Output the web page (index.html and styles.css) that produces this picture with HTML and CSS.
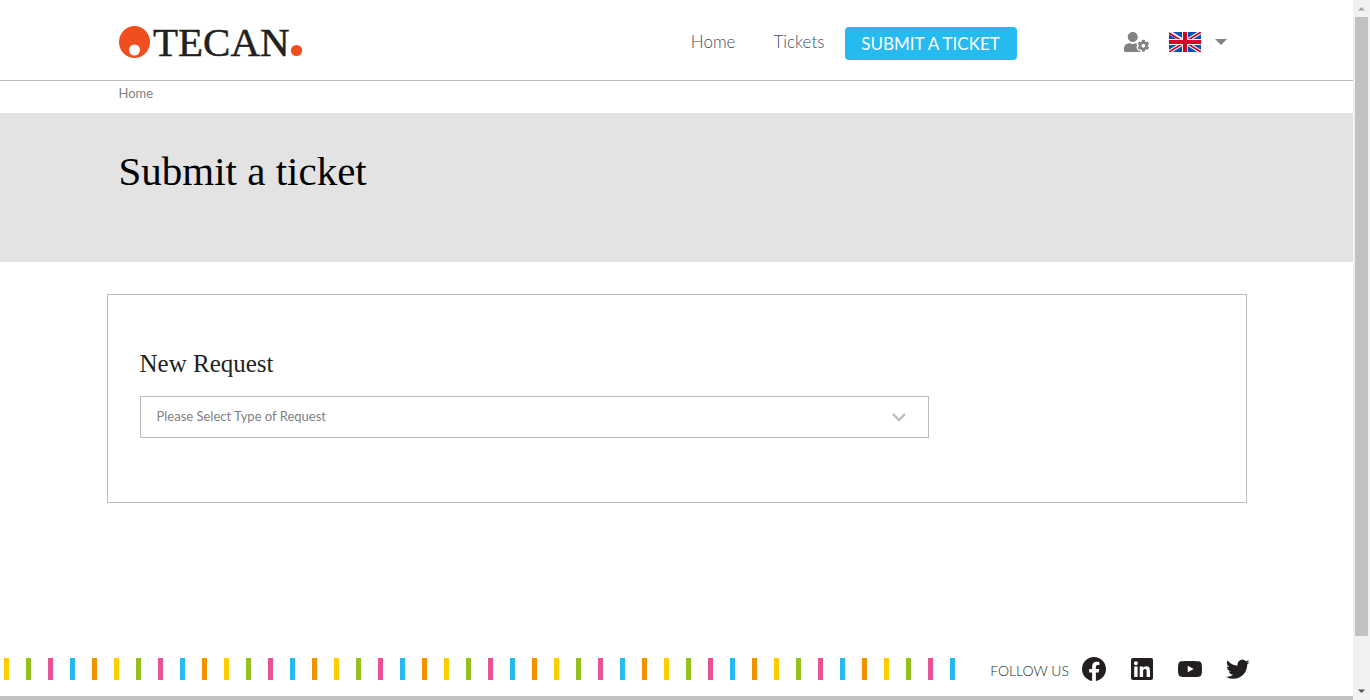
FILE: index.html
```html
<!DOCTYPE html>
<html lang="en">
<head>
<meta charset="utf-8">
<title>Submit a ticket</title>
<link rel="stylesheet" href="styles.css">
</head>
<body>
<div class="page">
  <header class="header">
    <div class="container header-row">
      <a class="logo" href="#" aria-label="Tecan">
        <svg width="184" height="54" viewBox="0 -10 184 54">
          <ellipse cx="15.500" cy="17" rx="15.500" ry="16" fill="#f04e1f"/>
          <circle cx="15.500" cy="25" r="5.500" fill="#fff"/>
          <text x="34" y="31" class="logo-text">TECAN</text>
          <circle cx="177.500" cy="25.500" r="5.600" fill="#f04e1f"/>
        </svg>
      </a>
      <nav class="nav">
        <a class="nav-link" href="#">Home</a>
        <a class="nav-link" href="#">Tickets</a>
        <a class="nav-button" href="#">SUBMIT A TICKET</a>
      </nav>
      <div class="tools">
        <button class="icon-button" type="button" aria-label="Account settings">
          <svg width="25" height="20" viewBox="0 0 640 512" fill="#808285"><path d="M610.5 373.3c2.600-14.100 2.600-28.500 0-42.600l25.800-14.900c3-1.700 4.300-5.200 3.300-8.500-6.700-21.600-18.200-41.200-33.200-57.400-2.300-2.500-6-3.100-9-1.400l-25.800 14.900c-10.900-9.300-23.400-16.500-36.900-21.300v-29.800c0-3.400-2.400-6.400-5.700-7.100-22.300-5-45-4.800-66.200 0-3.300.7-5.700 3.700-5.700 7.100v29.800c-13.500 4.800-26 12-36.900 21.300l-25.800-14.900c-2.900-1.700-6.700-1.100-9 1.400-15 16.200-26.500 35.800-33.200 57.400-1 3.300.4 6.800 3.300 8.500l25.800 14.900c-2.600 14.100-2.600 28.500 0 42.600l-25.800 14.900c-3 1.700-4.300 5.200-3.300 8.500 6.700 21.600 18.200 41.100 33.200 57.400 2.300 2.500 6 3.100 9 1.400l25.800-14.900c10.900 9.300 23.400 16.500 36.900 21.300v29.800c0 3.400 2.400 6.400 5.700 7.100 22.300 5 45 4.800 66.200 0 3.300-.7 5.700-3.700 5.700-7.100v-29.800c13.500-4.800 26-12 36.900-21.300l25.800 14.900c2.900 1.700 6.700 1.100 9-1.400 15-16.200 26.500-35.800 33.200-57.400 1-3.300-.4-6.800-3.300-8.500l-25.800-14.900zM496 400.500c-26.800 0-48.500-21.800-48.500-48.500s21.800-48.500 48.500-48.500 48.500 21.800 48.500 48.500-21.700 48.500-48.500 48.500zM224 256c70.700 0 128-57.300 128-128S294.700 0 224 0 96 57.300 96 128s57.300 128 128 128zm201.200 226.500c-2.300-1.200-4.600-2.600-6.800-3.900l-7.900 4.600c-6 3.400-12.800 5.300-19.600 5.300-10.900 0-21.400-4.600-28.900-12.600-18.300-19.800-32.300-43.900-40.200-69.600-5.500-17.700 1.900-36.400 17.900-45.700l7.900-4.600c-.1-2.600-.1-5.200 0-7.800l-7.900-4.600c-16-9.200-23.400-28-17.900-45.700.9-2.900 2.200-5.800 3.200-8.700-3.800-.3-7.500-1.200-11.400-1.200h-16.700c-22.200 10.200-46.900 16-72.900 16s-50.600-5.800-72.900-16h-16.700C60.200 288 0 348.200 0 422.400V464c0 26.500 21.500 48 48 48h352c10.100 0 19.500-3.200 27.200-8.500-1.200-3.800-2-7.700-2-11.800v-9.200z"/></svg>
        </button>
        <button class="icon-button language" type="button" aria-label="Language">
          <svg width="32" height="20" viewBox="0 0 32 20">
            <path fill="#0052b4" d="M0 0h32v20H0z"/>
            <path stroke="#f0f0f0" stroke-width="4" d="M0 0l32 20M32 0L0 20"/>
            <path stroke="#d80027" stroke-width="1.500" d="M0 1l13 8M19 8L32 0M0 20l13-8M19 12l13 8"/>
            <path fill="#f0f0f0" d="M13 0h6v20h-6zM0 7h32v6H0z"/>
            <path fill="#d80027" d="M14 0h4v20h-4zM0 8h32v4H0z"/>
          </svg>
          <svg width="12" height="6" viewBox="0 0 12 6"><path fill="#808285" d="M0 0h12L6 6z"/></svg>
        </button>
      </div>
    </div>
  </header>
  <nav class="container breadcrumb" aria-label="Breadcrumb"><a href="#">Home</a></nav>
  <section class="banner">
    <div class="container"><h1>Submit a ticket</h1></div>
  </section>
  <main class="card">
    <h2><label for="request-type">New Request</label></h2>
    <div class="select-wrap">
      <select id="request-type">
        <option>Please Select Type of Request</option>
      </select>
      <svg class="chevron" width="14" height="9" viewBox="0 0 14 9"><path d="M1 1l6 6 6-6" fill="none" stroke="#bcbcbc" stroke-width="2.400"/></svg>
    </div>
  </main>
  <footer class="footer">
    <div class="stripes"></div>
    <div class="social">
      <span class="follow">FOLLOW US</span>
      <div class="social-links">
        <a href="#" aria-label="Facebook"><svg width="24" height="24" viewBox="0 0 24 24"><path d="M24 12.070C24 5.400 18.630 0 12 0S0 5.400 0 12.070C0 18.100 4.390 23.100 10.130 24v-8.440H7.080v-3.490h3.050V9.410c0-3.020 1.790-4.700 4.530-4.700 1.310 0 2.680.24 2.680.24v2.970h-1.510c-1.490 0-1.960.93-1.960 1.890v2.260h3.330l-.53 3.490h-2.800V24C19.610 23.100 24 18.100 24 12.070z"/></svg></a>
        <a href="#" aria-label="LinkedIn"><svg width="24" height="24" viewBox="0 0 24 24"><path fill-rule="evenodd" d="M3 1h18a2 2 0 0 1 2 2v18a2 2 0 0 1-2 2H3a2 2 0 0 1-2-2V3a2 2 0 0 1 2-2zM4.200 9.500v10.400h3.400V9.500zM5.900 4.300a2 2 0 1 0 0 4 2 2 0 0 0 0-4zM9.700 9.500v10.400h3.400v-5.200c0-1.400.4-2.600 1.900-2.600s1.600 1.400 1.600 2.700v5.100H20v-5.700c0-2.900-.7-4.900-3.900-4.900-1.500 0-2.600.8-3 1.600V9.500z"/></svg></a>
        <a href="#" aria-label="YouTube"><svg width="24" height="24" viewBox="0 0 24 24"><path fill-rule="evenodd" d="M3.500 4.300C8 3.900 16 3.900 20.500 4.300 22.600 4.500 23.500 5.500 23.700 7.500c.4 3 .4 6 0 9-.2 2-1.100 3-3.200 3.200-4.500.4-12.500.4-17 0C1.400 19.500.5 18.500.3 16.500c-.4-3-.4-6 0-9 .2-2 1.100-3 3.200-3.200zM9.700 8.700v6.600l6-3.300z"/></svg></a>
        <a href="#" aria-label="Twitter"><svg width="24" height="24" viewBox="0 0 24 24"><path d="M23.640 4.940a9.700 9.700 0 0 1-2.780.76 4.860 4.860 0 0 0 2.130-2.680 9.700 9.700 0 0 1-3.080 1.180 4.840 4.840 0 0 0-8.250 4.410A13.740 13.740 0 0 1 1.680 3.550a4.840 4.840 0 0 0 1.500 6.460 4.820 4.820 0 0 1-2.190-.6v.06a4.840 4.840 0 0 0 3.880 4.750 4.860 4.860 0 0 1-2.190.08 4.850 4.850 0 0 0 4.530 3.360A9.720 9.720 0 0 1 0 19.670a13.700 13.700 0 0 0 7.420 2.170c8.910 0 13.780-7.380 13.780-13.780l-.02-.63a9.800 9.800 0 0 0 2.460-2.490z"/></svg></a>
      </div>
    </div>
  </footer>
</div>
<div class="scrollbar" aria-hidden="true">
  <svg width="17" height="17" viewBox="0 0 17 17"><path fill="#a3a3a3" d="M5 10.500h7L8.500 7z"/></svg>
  <div class="track"><div class="thumb"></div></div>
  <svg width="17" height="17" viewBox="0 0 17 17"><path fill="#505050" d="M5 6.500h7L8.500 10z"/></svg>
</div>
</body>
</html>
```
FILE: styles.css
```css
* { box-sizing: border-box; }

body {
  margin: 0;
  height: 100vh;
  display: flex;
  background: #fff;
  color: #231f20;
  font-family: Lato, "Liberation Sans", sans-serif;
  font-size: 16px;
}

a { color: inherit; text-decoration: none; }
svg { display: block; }

.page {
  flex: 1;
  min-width: 0;
  display: flex;
  flex-direction: column;
  border-bottom: 4px solid #c1c1c1;
}

.container {
  width: 100%;
  max-width: 1140px;
  margin: 0 auto;
  padding: 0 12px;
}

.header { border-bottom: 1px solid #bcbcbc; }

.header-row {
  height: 80px;
  display: flex;
  align-items: center;
}

.logo { padding-top: 3px; }

.logo-text {
  font-family: "Liberation Serif", serif;
  font-size: 41px;
  fill: #231f20;
  stroke: #231f20;
  stroke-width: 0.5px;
}

.nav {
  display: flex;
  align-items: center;
  margin-left: auto;
  padding-top: 6px;
}

.nav-link {
  margin-right: 38px;
  padding-bottom: 2px;
  color: #414d5c;
  font-size: 17px;
  font-weight: 300;
  line-height: 24px;
}

.nav-link:nth-child(2) { margin-right: 20px; }

.nav-button {
  width: 172px;
  padding-top: 1px;
  border-radius: 4px;
  background: #25bbef;
  color: #fff;
  font-size: 17px;
  line-height: 32px;
  text-align: center;
}

.tools {
  display: flex;
  align-items: center;
  gap: 20px;
  margin-left: 107px;
  padding: 3px 8px 0 0;
}

.icon-button {
  display: flex;
  align-items: center;
  padding: 0;
  border: 0;
  background: none;
}

.language { gap: 14px; }

.breadcrumb {
  height: 32px;
  color: #808285;
  font-size: 13px;
  line-height: 25px;
}

.banner {
  height: 149px;
  padding-top: 34px;
  background: #e3e3e3;
}

h1, h2 {
  margin: 0;
  font-family: "Liberation Serif", serif;
  font-weight: 400;
}

h1 { color: #000; font-size: 41px; line-height: 48px; }

h2 { font-size: 25px; line-height: 32px; }

.card {
  width: 100%;
  max-width: 1140px;
  margin: 32px auto 0;
  padding: 53px 32px 64px;
  border: 1px solid #bcbcbc;
}

.select-wrap {
  position: relative;
  width: 100%;
  max-width: 789px;
  margin-top: 16px;
}

select {
  display: block;
  width: 100%;
  height: 42px;
  padding: 0 40px 2px 16px;
  appearance: none;
  border: 1px solid #bcbcbc;
  border-radius: 0;
  background: #fff;
  color: #808285;
  font: 13px Lato, sans-serif;
}

.chevron {
  position: absolute;
  top: 17px;
  right: 23px;
  pointer-events: none;
}

.footer {
  display: flex;
  align-items: center;
  gap: 34px;
  margin-top: auto;
  padding-bottom: 15px;
}

.stripes {
  flex: 1;
  height: 22px;
  background: repeating-linear-gradient(90deg,
    #fff 0 4px, #ffcc00 4px 9px, #fff 9px 26px,
    #95c11f 26px 31px, #fff 31px 48px,
    #ea5297 48px 53px, #fff 53px 70px,
    #25bbef 70px 75px, #fff 75px 92px,
    #f39200 92px 97px, #fff 97px 110px);
}

.social {
  display: flex;
  align-items: center;
  gap: 13px;
  padding-right: 103px;
}

.follow {
  padding-top: 4px;
  font-size: 14px;
  font-weight: 300;
  line-height: 20px;
}

.social-links {
  display: flex;
  gap: 24px;
  fill: #231f20;
}

.scrollbar {
  width: 17px;
  display: flex;
  flex-direction: column;
  background: #f1f1f1;
}

.track { flex: 1; padding: 0 2px; }

.thumb { height: 93%; background: #c1c1c1; }
```
